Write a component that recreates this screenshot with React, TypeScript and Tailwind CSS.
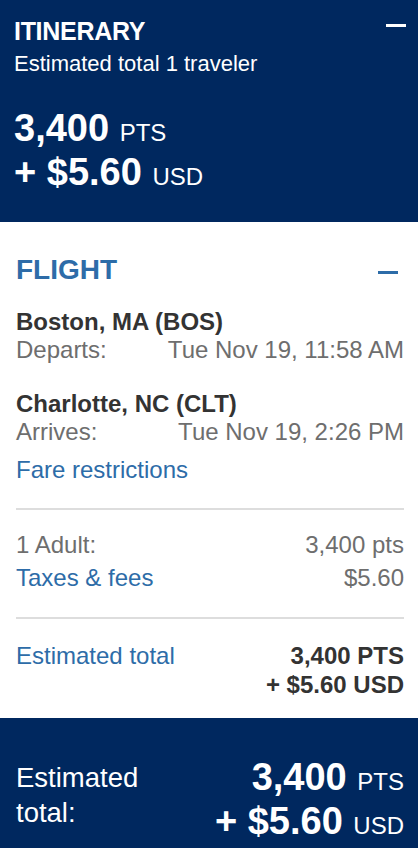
import React from "react";

const font = { fontFamily: '"Liberation Sans", Arial, Helvetica, sans-serif' };

function Row({ label, value }: { label: string; value: string }) {
  return (
    <div className="flex justify-between text-[24px] leading-[28px] text-[#6e6e6e]">
      <span>{label}</span>
      <span>{value}</span>
    </div>
  );
}

function BigPrice({ align }: { align?: string }) {
  return (
    <div className={`text-[38px] leading-[44px] font-bold ${align ?? ""}`}>
      <div>
        <span>3,400 </span>
        <span className="text-[24px] leading-none font-normal">PTS</span>
      </div>
      <div>
        <span>+ $5.60 </span>
        <span className="text-[24px] leading-none font-normal">USD</span>
      </div>
    </div>
  );
}

export default function App() {
  return (
    <div className="w-[418px] min-h-[848px] bg-white overflow-hidden" style={font}>
      {/* Header */}
      <div className="bg-[#00285f] text-white pl-[14px] pr-[12px] pt-[16px] pb-[28px]">
        <div className="flex items-start justify-between">
          <div className="text-[25px] leading-[30px] font-bold tracking-[-0.3px]">ITINERARY</div>
          <div className="mt-[8px] w-[20px] h-[3px] bg-white" />
        </div>
        <div className="mt-[4px] text-[22px] leading-[28px]">Estimated total 1 traveler</div>
        <div className="mt-[28px]">
          <BigPrice />
        </div>
      </div>

      {/* Flight section */}
      <div className="pl-[16px] pr-[14px] pt-[31px] pb-[19px]">
        <div className="flex items-start justify-between">
          <div className="text-[28px] leading-[34px] font-bold text-[#2d6ca8]">FLIGHT</div>
          <div className="mt-[18px] mr-[6px] w-[20px] h-[3px] bg-[#2d6ca8]" />
        </div>

        <div className="mt-[21px]">
          <div className="text-[24px] leading-[28px] font-bold text-[#333333]">Boston, MA (BOS)</div>
          <Row label="Departs:" value="Tue Nov 19, 11:58 AM" />
        </div>

        <div className="mt-[26px]">
          <div className="text-[24px] leading-[28px] font-bold text-[#333333]">Charlotte, NC (CLT)</div>
          <Row label="Arrives:" value="Tue Nov 19, 2:26 PM" />
        </div>

        <div className="mt-[10px] text-[24px] leading-[28px] text-[#2d6ca8]">Fare restrictions</div>

        <div className="mt-[24px] h-[2px] bg-[#dddddd]" />

        <div className="mt-[21px] flex flex-col gap-[5px]">
          <Row label="1 Adult:" value="3,400 pts" />
          <div className="flex justify-between text-[24px] leading-[28px]">
            <span className="text-[#2d6ca8]">Taxes &amp; fees</span>
            <span className="text-[#6e6e6e]">$5.60</span>
          </div>
        </div>

        <div className="mt-[25px] h-[2px] bg-[#dddddd]" />

        <div className="mt-[22px] flex items-start justify-between text-[24px] leading-[29px]">
          <span className="text-[#2d6ca8]">Estimated total</span>
          <div className="text-right font-bold text-[#333333]">
            <div>3,400 PTS</div>
            <div>+ $5.60 USD</div>
          </div>
        </div>
      </div>

      {/* Bottom total */}
      <div className="bg-[#00285f] text-white pl-[16px] pr-[14px] pt-[37px] pb-[20px] flex items-start justify-between">
        <div className="mt-[5px] text-[27.5px] leading-[35px]">
          <div>Estimated</div>
          <div>total:</div>
        </div>
        <BigPrice align="text-right" />
      </div>
    </div>
  );
}
